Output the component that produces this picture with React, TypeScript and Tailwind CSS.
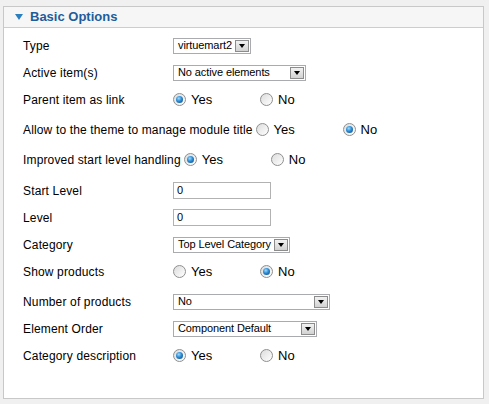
import React from "react";

const font = { fontFamily: '"Liberation Sans", Arial, sans-serif' };

function Radio({ checked }: { checked: boolean }) {
  return (
    <span className="relative inline-flex w-[13px] h-[13px] rounded-full border border-[#8e8f8f] bg-[linear-gradient(135deg,#dcdcdc,#ffffff)] items-center justify-center shrink-0">
      {checked && (
        <span className="w-[7px] h-[7px] rounded-full bg-[radial-gradient(circle_at_40%_35%,#9fdcff_0%,#2a8ad4_45%,#0d3f78_100%)]" />
      )}
    </span>
  );
}

function RadioGroup({ yes }: { yes: boolean }) {
  return (
    <div className="flex items-center">
      <div className="flex items-center w-[87px]">
        <Radio checked={yes} />
        <span className="ml-[5px] text-[13px] text-black">Yes</span>
      </div>
      <div className="flex items-center">
        <Radio checked={!yes} />
        <span className="ml-[5px] text-[13px] text-black">No</span>
      </div>
    </div>
  );
}

function Select({ w, text }: { w: string; text: string }) {
  return (
    <div className={`${w} h-[16px] border border-[#a9abae] bg-white flex items-center justify-between`}>
      <span className="pl-[4px] text-[11px] tracking-[-0.1px] text-black leading-none whitespace-nowrap">{text}</span>
      <span className="w-[14px] h-[12px] mr-[1px] border border-[#8c8c8c] bg-[linear-gradient(#f2f2f2,#d2d2d2)] flex items-center justify-center shrink-0">
        <span className="w-0 h-0 border-l-[3px] border-r-[3px] border-t-[4px] border-l-transparent border-r-transparent border-t-black" />
      </span>
    </div>
  );
}

function Input() {
  return (
    <div className="w-[98px] h-[17px] border border-[#b2b2b2] bg-white flex items-center">
      <span className="pl-[3px] text-[11px] text-black leading-none">0</span>
    </div>
  );
}

function Row({ label, children, cls = "" }: { label: string; children: React.ReactNode; cls?: string }) {
  return (
    <div className={`flex items-center h-[27px] ${cls}`}>
      <span className="min-w-[150px] text-[12px] tracking-[0.15px] text-black whitespace-nowrap">{label}</span>
      {children}
    </div>
  );
}

export default function App() {
  return (
    <div className="w-[489px] h-[404px] bg-[#f0f0f0] pt-[6px] pl-[3px] pr-[5px] overflow-hidden" style={font}>
      <div className="h-[393px] border border-[#c8c8c8] bg-white">
        <div className="h-[21px] bg-[#f6f6f6] border-b border-[#cdcdcd] flex items-center pl-[11px]">
          <span className="w-0 h-0 border-l-[4px] border-r-[4px] border-t-[6px] border-l-transparent border-r-transparent border-t-[#2a7fc0]" />
          <span className="ml-[7px] text-[13px] font-bold text-[#1d5d9c]">Basic Options</span>
        </div>
        <div className="pl-[19px] pt-[4px]">
          <Row label="Type">
            <Select w="w-[78px]" text="virtuemart2" />
          </Row>
          <Row label="Active item(s)">
            <Select w="w-[133px]" text="No active elements" />
          </Row>
          <Row label="Parent item as link">
            <RadioGroup yes={true} />
          </Row>
          <div className="flex items-center h-[27px] mt-[3px]">
            <span className="text-[12px] tracking-[0.15px] text-black whitespace-nowrap mr-[3px]">Allow to the theme to manage module title</span>
            <RadioGroup yes={false} />
          </div>
          <div className="flex items-center h-[27px] mt-[3px]">
            <span className="text-[12px] tracking-[0.15px] text-black whitespace-nowrap mr-[3px]">Improved start level handling</span>
            <RadioGroup yes={true} />
          </div>
          <Row label="Start Level" cls="mt-[4px]">
            <Input />
          </Row>
          <Row label="Level">
            <Input />
          </Row>
          <Row label="Category">
            <Select w="w-[117px]" text="Top Level Category" />
          </Row>
          <Row label="Show products">
            <RadioGroup yes={false} />
          </Row>
          <Row label="Number of products" cls="mt-[3px]">
            <Select w="w-[157px]" text="No" />
          </Row>
          <Row label="Element Order">
            <Select w="w-[144px]" text="Component Default" />
          </Row>
          <Row label="Category description">
            <RadioGroup yes={true} />
          </Row>
        </div>
      </div>
    </div>
  );
}
